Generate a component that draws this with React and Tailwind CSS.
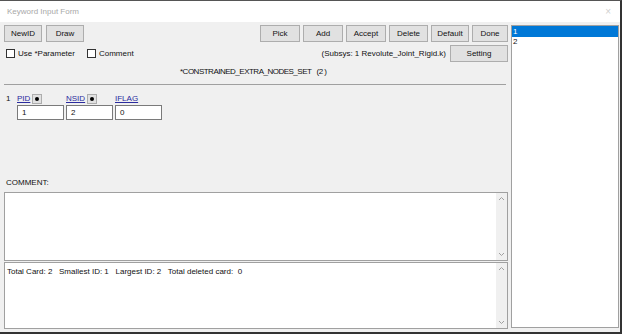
const Btn = ({ children, className = "" }) => (
  <div
    className={`h-[17px] flex items-center justify-center bg-[#e1e1e1] border border-[#adadad] ${className}`}
  >
    {children}
  </div>
);

const Check = ({ label }) => (
  <label className="flex items-center gap-[3px]">
    <span className="w-[9px] h-[9px] border border-[#333] bg-white" />
    <span>{label}</span>
  </label>
);

const Scroll = () => (
  <div className="w-[11px] h-full bg-[#f0f0f0] flex flex-col justify-between items-center text-[#a0a0a0] py-[3px]">
    <svg width="7" height="5" viewBox="0 0 7 5">
      <path d="M1 4 L3.5 1.5 L6 4" fill="none" stroke="#a0a0a0" strokeWidth="1" />
    </svg>
    <svg width="7" height="5" viewBox="0 0 7 5">
      <path d="M1 1 L3.5 3.5 L6 1" fill="none" stroke="#a0a0a0" strokeWidth="1" />
    </svg>
  </div>
);

const Field = ({ name, dot, value }) => (
  <div className="flex flex-col w-[47px] mr-[2px]">
    <div className="flex items-center h-[12px] gap-[2px]">
      <span className="text-[#2b2b9e] underline">{name}</span>
      {dot && (
        <span className="w-[10px] h-[10px] bg-[#e1e1e1] border border-[#adadad] flex items-center justify-center">
          <span className="w-[4px] h-[4px] rounded-full bg-black" />
        </span>
      )}
    </div>
    <div className="h-[15px] border border-[#7a7a7a] bg-white px-[4px] flex items-center">
      {value}
    </div>
  </div>
);

export default function App() {
  return (
    <div className="w-[622px] h-[334px] bg-[#f0f0f0] flex flex-col border-t border-t-[#555] border-r-2 border-r-[#333] border-b-2 border-b-[#333] font-['Liberation_Sans',sans-serif] text-[8px] text-[#111]">
      <div className="h-[21px] bg-white flex items-center justify-between pl-[7px] pr-[9px] text-[#a8a8a8] text-[8px]">
        <span>Keyword Input Form</span>
        <span className="text-[#d0d0d0] text-[10px]">×</span>
      </div>
      <div className="flex-1 flex">
        <div className="w-[511px] flex flex-col pl-[4px] pr-[3px]">
          <div className="flex items-center justify-between mt-[3px]">
            <div className="flex gap-[4px]">
              <Btn className="w-[38px]">NewID</Btn>
              <Btn className="w-[38px]">Draw</Btn>
            </div>
            <div className="flex gap-[3px]">
              <Btn className="w-[40px]">Pick</Btn>
              <Btn className="w-[40px]">Add</Btn>
              <Btn className="w-[40px]">Accept</Btn>
              <Btn className="w-[39px]">Delete</Btn>
              <Btn className="w-[38px]">Default</Btn>
              <Btn className="w-[36px]">Done</Btn>
            </div>
          </div>
          <div className="flex items-center justify-between mt-[3px]">
            <div className="flex gap-[12px] pl-[2px]">
              <Check label="Use *Parameter" />
              <Check label="Comment" />
            </div>
            <div className="flex items-center gap-[4px]">
              <span>(Subsys: 1 Revolute_Joint_Rigid.k)</span>
              <Btn className="w-[58px]">Setting</Btn>
            </div>
          </div>
          <div className="pl-[176px] mt-[3px] h-[14px] flex items-center tracking-[-0.5px]">
            *CONSTRAINED_EXTRA_NODES_SET&nbsp;&nbsp;&nbsp;(2 )
          </div>
          <div className="h-px bg-[#a0a0a0] mt-[5px] mr-[2px]" />
          <div className="flex mt-[8px] pl-[2px]">
            <span className="w-[11px] h-[12px] flex items-center">1</span>
            <Field name="PID" dot value="1" />
            <Field name="NSID" dot value="2" />
            <Field name="IFLAG" value="0" />
          </div>
          <div className="mt-[57px] pl-[2px] h-[12px] flex items-center">COMMENT:</div>
          <div className="mt-[3px] h-[69px] border border-[#a0a0a0] bg-white flex justify-end">
            <Scroll />
          </div>
          <div className="mt-[1px] h-[67px] border border-[#a0a0a0] bg-white flex justify-between">
            <div className="pl-[2px] pt-[3px] whitespace-pre">
              Total Card: 2   Smallest ID: 1   Largest ID: 2   Total deleted card:  0
            </div>
            <Scroll />
          </div>
        </div>
        <div className="w-[108px] mt-[3px] mb-[4px] border border-[#a0a0a0] bg-white flex flex-col">
          <div className="h-[11px] bg-[#0078d7] text-white pl-[1px] flex items-center">1</div>
          <div className="h-[10px] pl-[1px] flex items-center">2</div>
        </div>
      </div>
    </div>
  );
}
